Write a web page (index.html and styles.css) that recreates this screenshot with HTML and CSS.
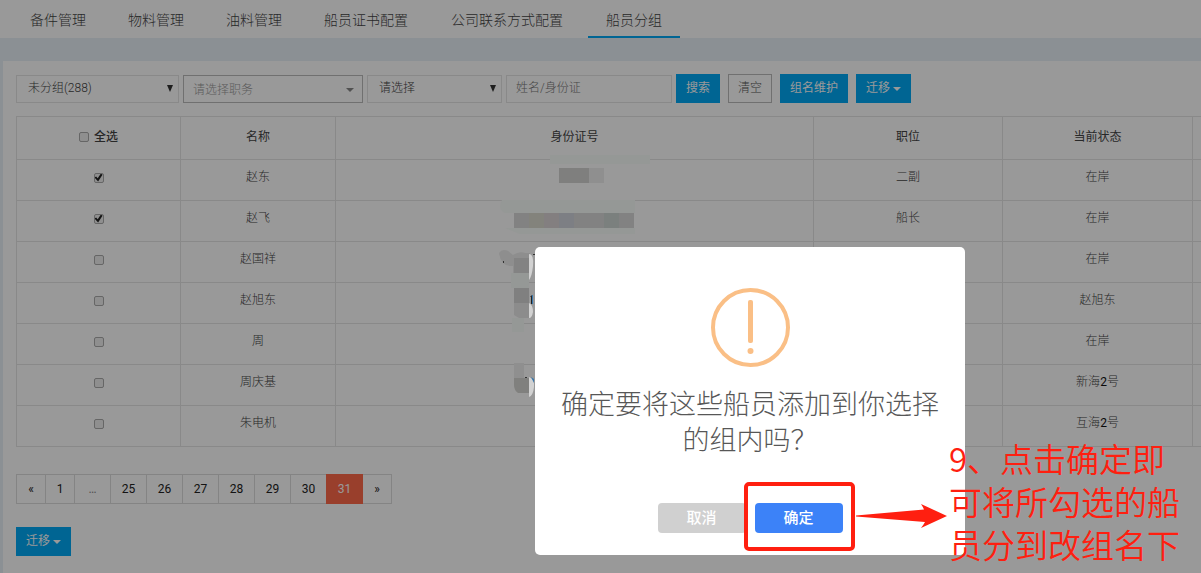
FILE: index.html
```html
<!DOCTYPE html>
<html lang="zh-CN">
<head>
<meta charset="utf-8">
<title>船员分组</title>
<link rel="stylesheet" href="styles.css">
</head>
<body>
<nav class="tabs">
  <a class="tab" href="#">备件管理</a>
  <a class="tab" href="#">物料管理</a>
  <a class="tab" href="#">油料管理</a>
  <a class="tab" href="#">船员证书配置</a>
  <a class="tab" href="#">公司联系方式配置</a>
  <a class="tab tab-active" href="#">船员分组</a>
</nav>
<main class="panel">
  <form class="toolbar">
    <span class="picker picker-group"><select aria-label="分组"><option>未分组(288)</option></select></span>
    <span class="picker picker-duty"><select aria-label="职务"><option>请选择职务</option></select></span>
    <span class="picker picker-state"><select aria-label="状态"><option>请选择</option></select></span>
    <input class="keyword" type="text" placeholder="姓名/身份证" aria-label="姓名/身份证">
    <div class="actions">
      <button class="btn" type="button">搜索</button>
      <button class="btn btn-plain" type="button">清空</button>
      <button class="btn" type="button">组名维护</button>
      <button class="btn" type="button">迁移<span class="caret"></span></button>
    </div>
  </form>
  <table class="crew">
    <colgroup><col class="col-check"><col class="col-name"><col><col class="col-duty"><col class="col-state"><col class="col-state"></colgroup>
    <thead>
      <tr><th><label class="all"><input class="tick" type="checkbox">全选</label></th><th>名称</th><th>身份证号</th><th>职位</th><th>当前状态</th><th></th></tr>
    </thead>
    <tbody>
      <tr><td><input class="tick" type="checkbox" aria-label="赵东" checked></td><td>赵东</td><td></td><td>二副</td><td>在岸</td><td></td></tr>
      <tr><td><input class="tick" type="checkbox" aria-label="赵飞" checked></td><td>赵飞</td><td></td><td>船长</td><td>在岸</td><td></td></tr>
      <tr><td><input class="tick" type="checkbox" aria-label="赵国祥"></td><td>赵国祥</td><td></td><td></td><td>在岸</td><td></td></tr>
      <tr><td><input class="tick" type="checkbox" aria-label="赵旭东"></td><td>赵旭东</td><td></td><td></td><td>赵旭东</td><td></td></tr>
      <tr><td><input class="tick" type="checkbox" aria-label="周"></td><td>周</td><td></td><td></td><td>在岸</td><td></td></tr>
      <tr><td><input class="tick" type="checkbox" aria-label="周庆基"></td><td>周庆基</td><td></td><td></td><td>新海<b>2</b>号</td><td></td></tr>
      <tr><td><input class="tick" type="checkbox" aria-label="朱电机"></td><td>朱电机</td><td></td><td></td><td>互海<b>2</b>号</td><td></td></tr>
    </tbody>
  </table>
  <div class="pages">
    <a class="page" href="#">«</a><a class="page" href="#">1</a><span class="page page-gap">…</span><a class="page" href="#">25</a><a class="page" href="#">26</a><a class="page" href="#">27</a><a class="page" href="#">28</a><a class="page" href="#">29</a><a class="page" href="#">30</a><a class="page page-active" href="#">31</a><a class="page" href="#">»</a>
  </div>
  <button class="btn" type="button">迁移<span class="caret"></span></button>
</main>
<div class="overlay"></div>
<svg class="redaction" width="160" height="250" viewBox="495 155 160 250" aria-hidden="true">
  <path fill="#959896" d="M550 155h100v9H550zM502 200h133v13H505q-8-4-3-13zM505 228h130v6H520z"/>
  <path fill="#7f7f7e" d="M559 168h30v15h-30z"/><path fill="#8f8f8f" d="M589 168h15v15h-15z"/>
  <path fill="#828282" d="M514 213h120v15H514z"/>
  <path fill="#83837c" d="M529 213h15v15h-15z"/><path fill="#837f80" d="M544 213h15v15h-15z"/>
  <path fill="#7d7f84" d="M559 213h15v15h-15z"/><path fill="#7b807e" d="M604 213h15v15h-15z"/>
  <path fill="#8e8e8e" d="M499 253q3-5 9-2l5 4q6-4 12-2h5v20h-17v-7q-12 1-14-13z"/>
  <path fill="#838383" d="M514 258h15v15h-15z"/><path fill="#959896" d="M511 273h18v15h-18z"/>
  <path fill="#808080" d="M514 288h15v15h-15z"/><path fill="#8c8c8c" d="M514 303h15v15h-10l-5-3z"/>
  <path fill="#959896" d="M512 318h12v14h-12z"/>
  <path fill="#d2d2d2" d="M529 254q5 0 4 12-1 10-4 14zM529 303q4 2 4 9-1 6-4 6zM529 377q6 2 5 10-1 9-5 10z"/>
  <path fill="#333" d="M503 261h1v2h-1zM533 254h2v1h-2zM525 377h2v1h-2z"/>
  <path fill="#222" d="M530 297l2-2v9h-1v-7z"/><path fill="#3877ad" d="M532 295h1v9h-1zM531 377l3 2v4l-2-4z"/>
  <path fill="#8f8f8f" d="M514 363h10v15h-10z"/><path fill="#80807e" d="M514 378h15v15h-11q-4-3-4-8z"/>
</svg>
<section class="dialog" role="dialog" aria-labelledby="dialog-title">
  <svg class="warn" width="80" height="80" viewBox="0 0 80 80" aria-hidden="true">
    <circle cx="40.500" cy="40.500" r="37.500" fill="none" stroke="#fabf86" stroke-width="4"/>
    <rect x="38" y="13" width="5" height="43" rx="2" fill="#fabf86"/><circle cx="40.500" cy="64" r="3" fill="#fabf86"/>
  </svg>
  <h2 class="dialog-title" id="dialog-title">确定要将这些船员添加到你选择的组内吗？</h2>
  <div class="dialog-actions">
    <button class="choice" type="button">取消</button>
    <button class="choice choice-ok" type="button">确定</button>
  </div>
</section>
<div class="frame"></div>
<svg class="arrow" width="92" height="26" viewBox="0 0 92 26" aria-hidden="true"><path fill="#ff1f10" d="M0 12.500L68 6.500Q67 4 65 1L91 13 65 25Q68 21 69 19L0 13.500z"/></svg>
<p class="note">9、点击确定即可将所勾选的船员分到改组名下</p>
</body>
</html>
```

FILE: styles.css
```css
* { box-sizing: border-box; }
body {
  margin: 0;
  min-height: 100vh;
  display: flex;
  flex-direction: column;
  position: relative;
  overflow: hidden;
  background: #e8f0f7;
  color: #444;
  font: 300 12px/18px Roboto, "Noto Sans CJK SC", sans-serif;
}
button, input, select { font: inherit; color: inherit; }
a { color: inherit; text-decoration: none; }

.tabs { display: flex; gap: 6px; height: 38px; padding-left: 12px; background: #fff; }
.tab { padding: 0 18px; font-size: 14px; line-height: 40px; height: 38px; }
.tab:nth-child(n + 5) { margin-left: 1px; }
.tab-active { border-bottom: 2px solid #00a8f5; }

.panel { flex: 1; margin: 23px 0 0 3px; padding: 13px 0 0 13px; background: #fff; overflow: hidden; }
.toolbar { display: flex; align-items: center; gap: 4px; height: 29px; }
.picker { position: relative; height: 28px; }
.picker select {
  appearance: none;
  width: 100%;
  height: 28px;
  padding: 0 11px 2px;
  border: 1px solid #e5e5e5;
  border-radius: 0;
  background: #fff;
}
.picker::after {
  content: "";
  position: absolute;
  right: 6px;
  top: 10px;
  border: solid transparent;
  border-width: 7px 3px 0;
  border-top-color: #333;
}
.picker-group { width: 163px; }
.picker-duty { width: 180px; }
.picker-duty select { padding: 2px 9px 0; border-color: #bbb; color: #999; }
.picker-duty::after { right: 9px; top: 13px; border-width: 4px 4px 0; border-top-color: #888; }
.picker-state { width: 135px; }
.keyword { width: 166px; height: 28px; padding: 0 9px 2px; border: 1px solid #e5e5e5; background: #fff; }
.keyword::placeholder { color: #777; }
.actions { display: flex; gap: 8px; }
.btn { height: 29px; padding: 0 9px 1px; border: 1px solid #00a8f5; border-radius: 0; background: #00a8f5; color: #fff; font-weight: 400; }
.btn-plain { border-color: #bbb; background: #fff; color: #555; font-weight: 300; }
.caret { display: inline-block; margin-left: 3px; border: solid transparent; border-width: 4px 4px 0; border-top-color: #fff; vertical-align: 1px; }

.crew { width: calc(100% + 182px); margin-top: 13px; table-layout: fixed; border-collapse: collapse; text-align: center; }
.col-check { width: 164px; }
.col-name { width: 155px; }
.col-duty { width: 189px; }
.col-state { width: 190px; }
.crew th, .crew td { border: 1px solid #e5e5e5; padding: 0; }
.crew th { height: 43px; padding-bottom: 2px; font-weight: 400; }
.crew td { height: 41px; padding-bottom: 7px; }
.crew b { font-weight: 400; color: #111; }
.all { display: inline-flex; align-items: center; gap: 5px; font-weight: 500; }
.tick { appearance: none; position: relative; width: 10px; height: 10px; margin: 0; border: 1px solid #aaa; border-radius: 2px; background: #eee; vertical-align: -2px; }
.tick:checked::after { content: ""; position: absolute; inset: 0; background: #222; clip-path: polygon(0 50%, 20% 38%, 40% 60%, 80% 0, 100% 15%, 45% 100%); }

.pages { display: flex; margin: 27px 0 23px; color: #222; font-weight: 400; }
.page { min-width: 30px; height: 30px; border: 1px solid #ddd; line-height: 28px; text-align: center; flex: 0 0 37px; }
.page:first-child, .page:nth-child(2), .page:last-child { flex-basis: 30px; }
.page + .page { margin-left: -1px; }
.page-gap { color: #888; }
.page-active { position: relative; border-color: #ff694a; background: #ff694a; color: #fff; }

.overlay { position: absolute; inset: 0; background: rgba(0, 0, 0, 0.4); }
.redaction { position: absolute; left: 495px; top: 155px; }
.dialog { position: absolute; left: 535px; top: 247px; width: 430px; padding: 40px 20px 22px; border-radius: 5px; background: #fff; text-align: center; }
.warn { display: block; margin: 0 auto; }
.dialog-title { margin: 18px 0 46px; color: #575757; font: 300 27px/36px "Noto Sans CJK SC", sans-serif; }
.dialog-actions { display: flex; justify-content: center; gap: 9px; }
.choice { width: 88px; height: 30px; border: 0; border-radius: 4px; background: #d0d0d0; color: #fff; font-size: 15px; font-weight: 500; }
.choice-ok { background: #3c82f8; }

.frame { position: absolute; left: 744px; top: 482px; width: 111px; height: 69px; border: 4px solid #ff1f10; border-radius: 5px; }
.arrow { position: absolute; left: 856px; top: 503px; }
.note { position: absolute; left: 949px; top: 437px; width: 240px; margin: 0; color: #ff1f10; font: 350 33px/43px "Noto Sans CJK SC", sans-serif; }
```
